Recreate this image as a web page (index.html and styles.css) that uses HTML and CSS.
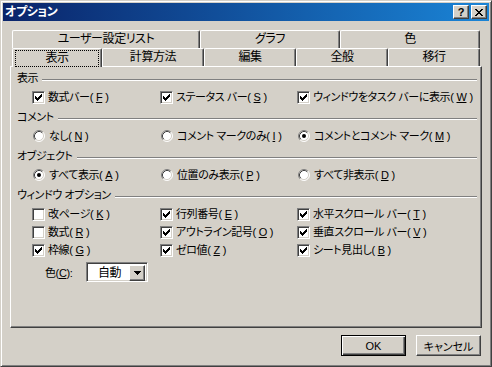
FILE: index.html
```html
<!DOCTYPE html>
<html lang="ja">
<head>
    <meta charset="UTF-8">
    <title>オプション</title>
    <link rel="stylesheet" href="styles.css">
</head>
<body>

<!-- shared glyphs -->
<svg class="defs" width="0" height="0">
    <symbol id="check" viewBox="0 0 7 7">
        <path d="M6 0h1v1h-1z M5 1h2v1h-2z M0 2h1v1h-1z M4 2h3v1h-3z M0 3h2v1h-2z M3 3h3v1h-3z M0 4h5v1h-5z M1 5h3v1h-3z M2 6h1v1h-1z" fill="#000"/>
    </symbol>
    <symbol id="radio" viewBox="0 0 12 12">
        <circle cx="6" cy="6" r="5" fill="#fff"/>
        <path d="M2.11 9.89A5.5 5.5 0 0 1 9.89 2.11" stroke="#808080" fill="none"/>
        <path d="M9.89 2.11A5.5 5.5 0 0 1 2.11 9.89" stroke="#fff" fill="none"/>
        <path d="M2.82 9.18A4.5 4.5 0 0 1 9.18 2.82" stroke="#404040" fill="none"/>
        <path d="M9.18 2.82A4.5 4.5 0 0 1 2.82 9.18" stroke="#d4d0c8" fill="none"/>
    </symbol>
</svg>

<div class="window">
    <div class="titlebar">
        <span class="title">オプション</span>
        <div class="caption-buttons">
            <span class="cap-btn help">?</span>
            <span class="cap-btn">
                <svg width="8" height="7" viewBox="0 0 8 7" shape-rendering="crispEdges">
                    <path d="M0 0h2v1h-2z M6 0h2v1h-2z M1 1h2v1h-2z M5 1h2v1h-2z M2 2h4v1h-4z M3 3h2v1h-2z M2 4h4v1h-4z M1 5h2v1h-2z M5 5h2v1h-2z M0 6h2v1h-2z M6 6h2v1h-2z" fill="#000"/>
                </svg>
            </span>
        </div>
    </div>

    <div class="content">
        <!-- Tabs (two rows) -->
        <div class="tab-row">
            <div class="tab w188">ユーザー設定リスト</div>
            <div class="tab w140">グラフ</div>
            <div class="tab w140">色</div>
        </div>
        <div class="tab-row front">
            <div class="tab w90 selected"><span class="focus">表示</span></div>
            <div class="tab w102">計算方法</div>
            <div class="tab w92">編集</div>
            <div class="tab w92">全般</div>
            <div class="tab w92">移行</div>
        </div>

        <div class="panel">
            <div class="group-title"><span>表示</span><i class="rule"></i></div>
            <div class="opt-row">
                <label class="opt"><span class="checkbox on"><svg><use href="#check"/></svg></span>数式バー(<u>F</u>)</label>
                <label class="opt"><span class="checkbox on"><svg><use href="#check"/></svg></span>ステータス バー(<u>S</u>)</label>
                <label class="opt"><span class="checkbox on"><svg><use href="#check"/></svg></span>ウィンドウをタスク バーに表示(<u>W</u>)</label>
            </div>

            <div class="group-title"><span>コメント</span><i class="rule"></i></div>
            <div class="opt-row">
                <label class="opt"><span class="radio"><svg><use href="#radio"/></svg></span>なし(<u>N</u>)</label>
                <label class="opt"><span class="radio"><svg><use href="#radio"/></svg></span>コメント マークのみ(<u>I</u>)</label>
                <label class="opt"><span class="radio on"><svg><use href="#radio"/></svg></span>コメントとコメント マーク(<u>M</u>)</label>
            </div>

            <div class="group-title"><span>オブジェクト</span><i class="rule"></i></div>
            <div class="opt-row">
                <label class="opt"><span class="radio on"><svg><use href="#radio"/></svg></span>すべて表示(<u>A</u>)</label>
                <label class="opt"><span class="radio"><svg><use href="#radio"/></svg></span>位置のみ表示(<u>P</u>)</label>
                <label class="opt"><span class="radio"><svg><use href="#radio"/></svg></span>すべて非表示(<u>D</u>)</label>
            </div>

            <div class="group-title"><span>ウィンドウ オプション</span><i class="rule"></i></div>
            <div class="opt-row">
                <label class="opt"><span class="checkbox"></span>改ページ(<u>K</u>)</label>
                <label class="opt"><span class="checkbox on"><svg><use href="#check"/></svg></span>行列番号(<u>E</u>)</label>
                <label class="opt"><span class="checkbox on"><svg><use href="#check"/></svg></span>水平スクロール バー(<u>T</u>)</label>
            </div>
            <div class="opt-row">
                <label class="opt"><span class="checkbox"></span>数式(<u>R</u>)</label>
                <label class="opt"><span class="checkbox on"><svg><use href="#check"/></svg></span>アウトライン記号(<u>O</u>)</label>
                <label class="opt"><span class="checkbox on"><svg><use href="#check"/></svg></span>垂直スクロール バー(<u>V</u>)</label>
            </div>
            <div class="opt-row">
                <label class="opt"><span class="checkbox on"><svg><use href="#check"/></svg></span>枠線(<u>G</u>)</label>
                <label class="opt"><span class="checkbox on"><svg><use href="#check"/></svg></span>ゼロ値(<u>Z</u>)</label>
                <label class="opt"><span class="checkbox on"><svg><use href="#check"/></svg></span>シート見出し(<u>B</u>)</label>
            </div>

            <div class="color-row">
                <span class="color-label">色(<u>C</u>):</span>
                <div class="combo">
                    <span class="combo-text">自動</span>
                    <span class="combo-btn">
                        <svg width="7" height="4" viewBox="0 0 7 4" shape-rendering="crispEdges">
                            <path d="M0 0h7v1h-7z M1 1h5v1h-5z M2 2h3v1h-3z M3 3h1v1h-1z" fill="#000"/>
                        </svg>
                    </span>
                </div>
            </div>
        </div>

        <div class="actions">
            <button class="btn default">OK</button>
            <button class="btn">キャンセル</button>
        </div>
    </div>
</div>

</body>
</html>
```

FILE: styles.css
```css
body {
    margin: 0;
    font-family: "Liberation Sans", "Noto Sans CJK JP", sans-serif;
    font-size: 11px;
    font-feature-settings: "palt";
    letter-spacing: -0.4px;
    color: #000;
    background: #d4d0c8;
}

.defs {
    position: absolute;
}

.window {
    width: 492px;
    height: 367px;
    box-sizing: border-box;
    padding: 2px;
    background: #d4d0c8;
    border: 1px solid;
    border-color: #d4d0c8 #404040 #404040 #d4d0c8;
    box-shadow: inset 1px 1px #fff, inset -1px -1px #808080;
}

/* Title bar */
.titlebar {
    height: 18px;
    display: flex;
    align-items: center;
    justify-content: space-between;
    padding: 0 2px 0 2px;
    background: linear-gradient(90deg, #0a246a, #1a84d6);
}

.title {
    color: #fff;
    font-weight: bold;
    font-size: 12px;
    line-height: 18px;
}

.caption-buttons {
    display: flex;
    gap: 2px;
}

.cap-btn {
    width: 16px;
    height: 14px;
    box-sizing: border-box;
    display: flex;
    align-items: center;
    justify-content: center;
    background: #d4d0c8;
    border: 1px solid;
    border-color: #fff #404040 #404040 #fff;
    box-shadow: inset -1px -1px #808080;
}

.help {
    font-weight: bold;
    font-size: 11px;
    line-height: 12px;
    letter-spacing: 0;
}

/* Content */
.content {
    padding: 9px 7px 0 7px;
}

.tab-row {
    display: flex;
    height: 18px;
    padding-left: 2px;
}

.tab {
    box-sizing: border-box;
    height: 18px;
    line-height: 16px;
    font-size: 12px;
    text-align: center;
    border-top: 1px solid #fff;
    border-left: 1px solid #fff;
    border-right: 1px solid #404040;
    box-shadow: inset -1px 0 #808080;
    border-radius: 2px 2px 0 0;
}

.w188 { width: 188px; }
.w140 { width: 140px; }
.w102 { width: 102px; }
.w92 { width: 92px; }
.w90 { width: 90px; }

.tab.selected {
    height: 19px;
    margin-bottom: -1px;
    background: #d4d0c8;
    position: relative;
    z-index: 1;
    padding: 1px 2px 0 2px;
}

.focus {
    display: block;
    height: 15px;
    line-height: 14px;
    border: 1px dotted #000;
}

.panel {
    width: 472px;
    height: 262px;
    box-sizing: border-box;
    padding: 3px 4px 0 6px;
    border: 1px solid;
    border-color: #fff #404040 #404040 #fff;
    box-shadow: inset -1px -1px #808080;
}

.group-title {
    display: flex;
    align-items: center;
    gap: 4px;
    height: 16px;
    line-height: 16px;
    margin-bottom: 2px;
}

.opt-row + .group-title {
    margin-top: 3px;
}

.rule {
    flex: 1;
    height: 0;
    margin-top: 3px;
    border-top: 1px solid #808080;
    border-bottom: 1px solid #fff;
}

.opt-row {
    display: grid;
    grid-template-columns: 128px 137px 1fr;
    height: 18px;
    padding-left: 15px;
}

.opt {
    display: flex;
    align-items: center;
    gap: 3px;
    white-space: nowrap;
    line-height: 18px;
}

u {
    text-underline-offset: 1px;
}

.checkbox {
    width: 13px;
    height: 13px;
    box-sizing: border-box;
    background: #fff;
    border: 1px solid;
    border-color: #808080 #fff #fff #808080;
    box-shadow: inset 1px 1px #404040, inset -1px -1px #d4d0c8;
    padding: 2px;
}

.checkbox svg {
    display: block;
    width: 7px;
    height: 7px;
}

.radio {
    width: 12px;
    height: 12px;
    margin: 0 1px 0 1px;
    position: relative;
}

.radio svg {
    display: block;
    width: 12px;
    height: 12px;
}

.radio.on::after {
    content: "";
    position: absolute;
    left: 4px;
    top: 4px;
    width: 4px;
    height: 4px;
    border-radius: 50%;
    background: #000;
}

.color-row {
    display: flex;
    align-items: center;
    gap: 8px;
    margin-top: 3px;
    padding-left: 28px;
    height: 20px;
}

.color-label {
    width: 33px;
}

.combo {
    display: flex;
    width: 62px;
    height: 20px;
    box-sizing: border-box;
    background: #fff;
    border: 1px solid;
    border-color: #808080 #fff #fff #808080;
    box-shadow: inset 1px 1px #404040, inset -1px -1px #d4d0c8;
    padding: 2px;
}

.combo-text {
    flex: 1;
    line-height: 16px;
    font-size: 12px;
    padding-left: 9px;
}

.combo-btn {
    width: 16px;
    height: 16px;
    box-sizing: border-box;
    display: flex;
    align-items: center;
    justify-content: center;
    background: #d4d0c8;
    border: 1px solid;
    border-color: #fff #404040 #404040 #fff;
    box-shadow: inset -1px -1px #808080;
}

/* Buttons */
.actions {
    display: flex;
    justify-content: flex-end;
    gap: 10px;
    margin-top: 7px;
    padding-right: 1px;
}

.btn {
    width: 65px;
    height: 21px;
    box-sizing: border-box;
    font: inherit;
    padding: 0;
    background: #d4d0c8;
    border: 1px solid;
    border-color: #fff #404040 #404040 #fff;
    box-shadow: inset -1px -1px #808080;
}

.btn.default {
    border: 1px solid #000;
    box-shadow: inset 1px 1px #fff, inset -1px -1px #404040, inset -2px -2px #808080;
}
```
